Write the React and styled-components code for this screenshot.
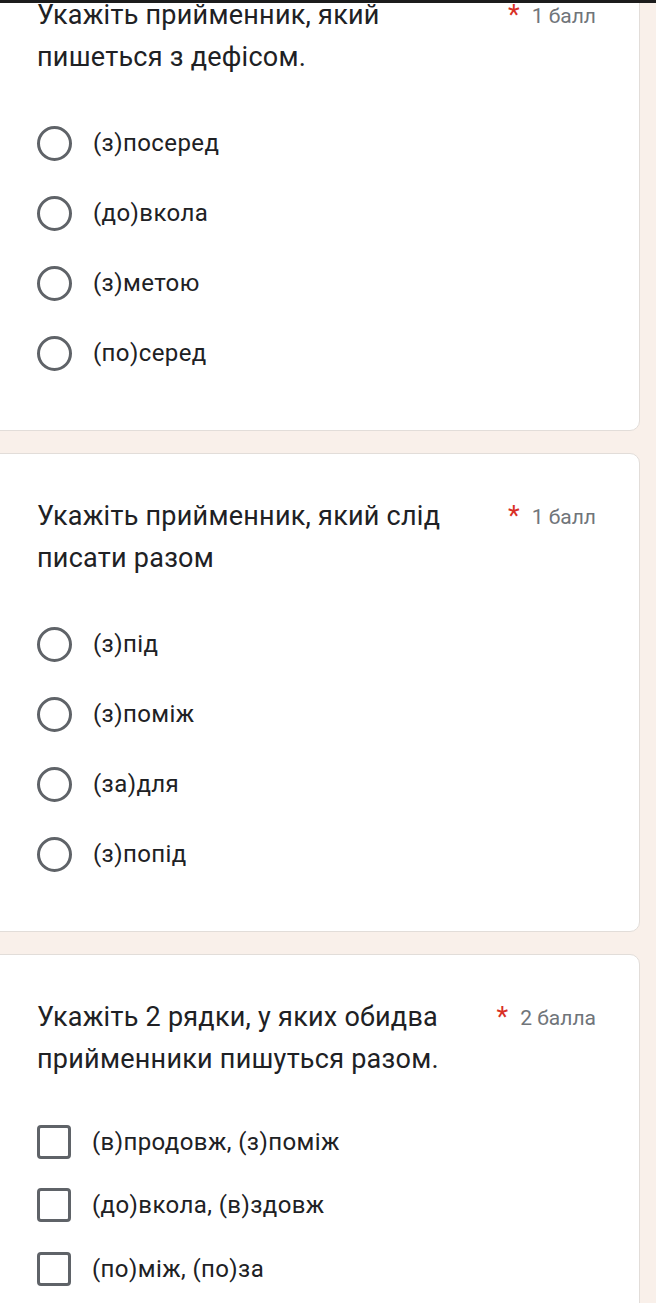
import React from "react";
import styled, { createGlobalStyle } from "styled-components";

const Global = createGlobalStyle`
  html, body { margin: 0; padding: 0; background: #f9f0ea; }
  body { font-family: Roboto, "Noto Sans", Arial, sans-serif; color: #202124; overflow: hidden; }
`;

const TopBar = styled.div`
  position: fixed;
  top: 0;
  left: 0;
  right: 0;
  height: 3px;
  background: #1c1c1c;
  z-index: 5;
`;

const Page = styled.div`
  display: flex;
  flex-direction: column;
  gap: 22px;
  margin-top: -48px;
  margin-left: -12px;
  margin-right: 16px;
`;

const Card = styled.section`
  background: #fff;
  border: 1px solid #e2ddd9;
  border-radius: 10px;
  padding: 41px 43px 42px 48px;
  display: flex;
  flex-direction: column;
  gap: 30px;
`;

const Header = styled.div`
  display: flex;
  align-items: flex-start;
  justify-content: space-between;
`;

const Title = styled.div`
  max-width: 445px;
  font-size: 27px;
  line-height: 42px;
  letter-spacing: 0.25px;
`;

const Points = styled.div`
  display: flex;
  align-items: flex-start;
  gap: 12px;
  font-size: 21px;
  line-height: 42px;
  color: #70757a;
  white-space: nowrap;
  padding-top: 1px;
`;

const Star = styled.span`
  color: #d93025;
  font-size: 27px;
  line-height: 40px;
`;

const Options = styled.div`
  display: flex;
  flex-direction: column;
`;

const Option = styled.label`
  display: flex;
  align-items: center;
  gap: 21px;
  height: ${(p) => (p.$check ? "63.5px" : "70px")};
  font-size: 24px;
  letter-spacing: 0.4px;
`;

const Radio = styled.span`
  width: 35px;
  height: 35px;
  box-sizing: border-box;
  border: 3px solid #5f6368;
  border-radius: 50%;
  flex: none;
`;

const Box = styled.span`
  width: 34px;
  height: 34px;
  box-sizing: border-box;
  border: 3.5px solid #5f6368;
  border-radius: 4px;
  flex: none;
`;

const questions = [
  {
    title: "Укажіть прийменник, який пишеться з дефісом.",
    points: "1 балл",
    options: ["(з)посеред", "(до)вкола", "(з)метою", "(по)серед"],
  },
  {
    title: "Укажіть прийменник, який слід писати разом",
    points: "1 балл",
    options: ["(з)під", "(з)поміж", "(за)для", "(з)попід"],
  },
  {
    title: "Укажіть 2 рядки, у яких обидва прийменники пишуться разом.",
    points: "2 балла",
    check: true,
    options: ["(в)продовж, (з)поміж", "(до)вкола, (в)здовж", "(по)між, (по)за"],
  },
];

export default function App() {
  return (
    <>
      <Global />
      <TopBar />
      <Page>
        {questions.map((q, i) => (
          <Card key={i}>
            <Header>
              <Title>{q.title}</Title>
              <Points>
                <Star>*</Star>
                <span>{q.points}</span>
              </Points>
            </Header>
            <Options>
              {q.options.map((o) => (
                <Option key={o} $check={q.check}>
                  {q.check ? <Box /> : <Radio />}
                  <span>{o}</span>
                </Option>
              ))}
            </Options>
          </Card>
        ))}
      </Page>
    </>
  );
}
